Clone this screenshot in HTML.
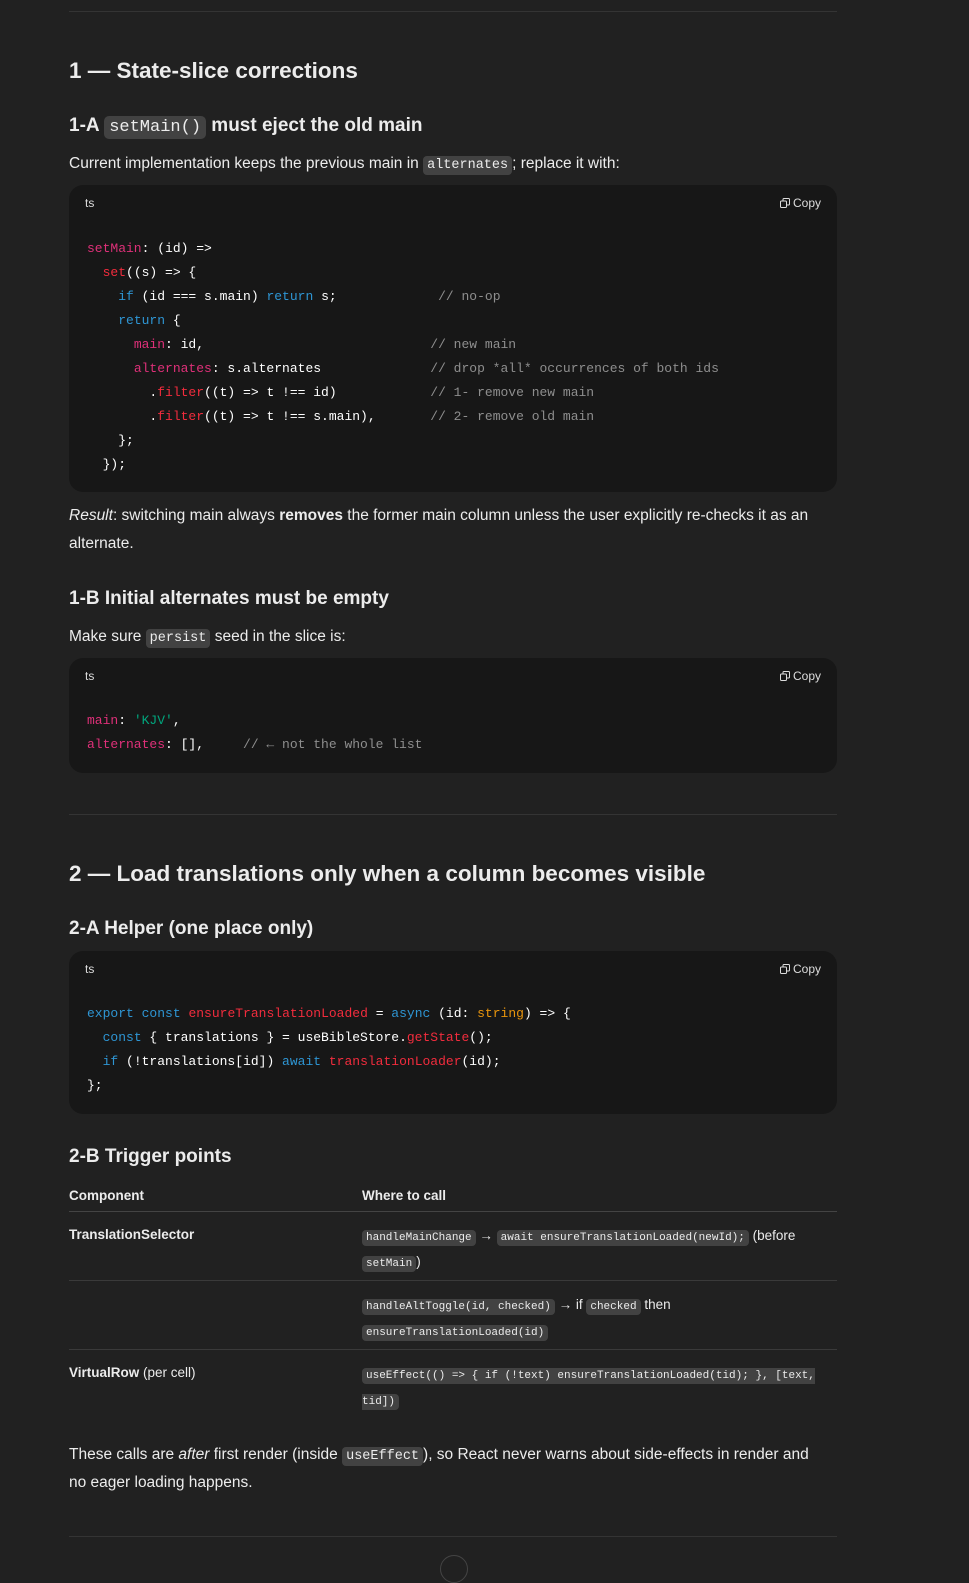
<!DOCTYPE html>
<html><head><meta charset="utf-8"><style>
*{margin:0;padding:0;box-sizing:border-box}
body{width:969px;height:1561px;background:#212121;color:#ececec;font-family:"Liberation Sans",sans-serif;position:relative;overflow:hidden}
.a{position:absolute;left:69px;white-space:nowrap}
hr{position:absolute;left:69px;width:768px;border:0;border-top:1px solid #343434;height:0}
h2{font-size:22.5px;font-weight:bold;line-height:30px}
h3{font-size:19px;font-weight:bold;line-height:28px}
p{font-size:15.5px;line-height:28px}
code{font-family:"Liberation Mono",monospace;background:#424242;border-radius:4px;padding:2px 4px;font-size:13.5px}
h3 code{font-size:17px;font-weight:normal;padding:2px 5px;border-radius:5px}
.cb{position:absolute;left:69px;width:768px;background:#171717;border-radius:14px}
.ts{position:absolute;left:16px;top:11px;font-size:12px;color:#ddd}
.cp{position:absolute;right:16px;top:11px;font-size:12px;color:#ddd}
.cp svg{vertical-align:-1px;margin-right:3px}
pre{position:absolute;left:18px;font-family:"Liberation Mono",monospace;font-size:13px;line-height:24px;color:#fff}
.k{color:#2e95d3}.p{color:#df3079}.f{color:#f22c3d}.s{color:#00a67d}.t{color:#e9950c}.c{color:#8e8e8e}
.tb{position:absolute;left:69px;width:768px;font-size:14px}
.tc code{font-size:11px;padding:2px 4px}
.row{position:absolute;left:0;width:768px;border-top:1px solid #3a3a3a}
</style></head><body>
<hr style="top:11px">
<h2 class="a" style="top:56px">1 — State-slice corrections</h2>
<h3 class="a" style="top:112px">1-A <code>setMain()</code> must eject the old main</h3>
<p class="a" style="top:150px">Current implementation keeps the previous main in <code>alternates</code>; replace it with:</p>
<div class="cb" style="top:185px;height:307px">
<div class="ts">ts</div>
<div class="cp"><svg width="10" height="10" viewBox="0 0 10 10" fill="none" stroke="#ddd"><rect x="0.5" y="3" width="6" height="6.5" rx="1"/><path d="M3 2.5V1.5a1 1 0 0 1 1-1h4.5a1 1 0 0 1 1 1V6a1 1 0 0 1-1 1H7"/></svg>Copy</div>
<pre style="top:52px"><span class="p">setMain</span>: (id) =&gt;
  <span class="f">set</span>((s) =&gt; {
    <span class="k">if</span> (id === s.main) <span class="k">return</span> s;             <span class="c">// no-op</span>
    <span class="k">return</span> {
      <span class="p">main</span>: id,                             <span class="c">// new main</span>
      <span class="p">alternates</span>: s.alternates              <span class="c">// drop *all* occurrences of both ids</span>
        .<span class="f">filter</span>((t) =&gt; t !== id)            <span class="c">// 1- remove new main</span>
        .<span class="f">filter</span>((t) =&gt; t !== s.main),       <span class="c">// 2- remove old main</span>
    };
  });</pre>
</div>
<p class="a" style="top:502px"><i>Result</i>: switching main always <b>removes</b> the former main column unless the user explicitly re-checks it as an</p>
<p class="a" style="top:530px">alternate.</p>
<h3 class="a" style="top:585px">1-B Initial alternates must be <b>empty</b></h3>
<p class="a" style="top:623px">Make sure <code>persist</code> seed in the slice is:</p>
<div class="cb" style="top:658px;height:115px">
<div class="ts">ts</div>
<div class="cp"><svg width="10" height="10" viewBox="0 0 10 10" fill="none" stroke="#ddd"><rect x="0.5" y="3" width="6" height="6.5" rx="1"/><path d="M3 2.5V1.5a1 1 0 0 1 1-1h4.5a1 1 0 0 1 1 1V6a1 1 0 0 1-1 1H7"/></svg>Copy</div>
<pre style="top:51px"><span class="p">main</span>: <span class="s">'KJV'</span>,
<span class="p">alternates</span>: [],     <span class="c">// ← not the whole list</span></pre>
</div>
<hr style="top:814px">
<h2 class="a" style="top:859px">2 — Load translations only when a column becomes visible</h2>
<h3 class="a" style="top:915px">2-A Helper (one place only)</h3>
<div class="cb" style="top:951px;height:163px">
<div class="ts">ts</div>
<div class="cp"><svg width="10" height="10" viewBox="0 0 10 10" fill="none" stroke="#ddd"><rect x="0.5" y="3" width="6" height="6.5" rx="1"/><path d="M3 2.5V1.5a1 1 0 0 1 1-1h4.5a1 1 0 0 1 1 1V6a1 1 0 0 1-1 1H7"/></svg>Copy</div>
<pre style="top:51px"><span class="k">export</span> <span class="k">const</span> <span class="f">ensureTranslationLoaded</span> = <span class="k">async</span> (id: <span class="t">string</span>) =&gt; {
  <span class="k">const</span> { translations } = useBibleStore.<span class="f">getState</span>();
  <span class="k">if</span> (!translations[id]) <span class="k">await</span> <span class="f">translationLoader</span>(id);
};</pre>
</div>
<h3 class="a" style="top:1143px">2-B Trigger points</h3>
<div class="tb" style="top:1185px;height:230px">
<div style="position:absolute;left:0;top:3px;font-weight:bold;font-size:13.5px">Component</div>
<div style="position:absolute;left:293px;top:3px;font-weight:bold;font-size:13.5px">Where to call</div>
<div class="row" style="top:26px;border-color:#444"></div>
<div style="position:absolute;left:0;top:42px;font-weight:bold;font-size:13.5px">TranslationSelector</div>
<div class="tc" style="position:absolute;left:293px;top:39px;width:470px;line-height:24px;font-size:13.5px"><code>handleMainChange</code> → <code>await ensureTranslationLoaded(newId);</code> (before <code>setMain</code>)</div>
<div class="row" style="top:95px"></div>
<div class="tc" style="position:absolute;left:293px;top:108px;width:470px;line-height:24px;font-size:13.5px"><code>handleAltToggle(id, checked)</code> → if <code>checked</code> then <code>ensureTranslationLoaded(id)</code></div>
<div class="row" style="top:164px"></div>
<div style="position:absolute;left:0;top:180px;font-size:13.5px"><b>VirtualRow</b> (per cell)</div>
<div class="tc" style="position:absolute;left:293px;top:177px;width:470px;line-height:24px;font-size:13.5px"><code>useEffect(() =&gt; { if (!text) ensureTranslationLoaded(tid); }, [text, tid])</code></div>
</div>
<p class="a" style="top:1441px">These calls are <i>after</i> first render (inside <code>useEffect</code>), so React never warns about side-effects in render and</p>
<p class="a" style="top:1469px">no eager loading happens.</p>
<hr style="top:1536px">
<div style="position:absolute;left:440px;top:1555px;width:28px;height:28px;border:1px solid #444;border-radius:50%"></div>
</body></html>
